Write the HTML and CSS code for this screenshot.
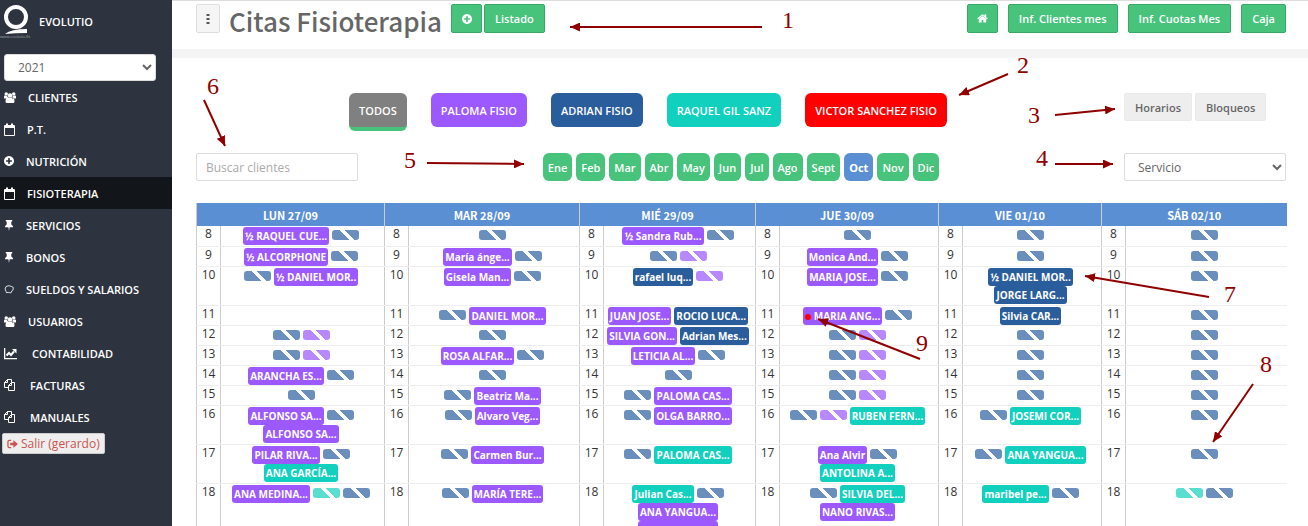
FILE: index.html
```html
<!DOCTYPE html>
<html lang="es">
<head>
<meta charset="utf-8">
<title>Citas Fisioterapia</title>
<link rel="stylesheet" href="styles.css">
</head>
<body>
<svg class="defs" aria-hidden="true">
  <symbol id="i-plus" viewBox="128 128 1536 1536"><path d="M1344 960v-128q0-26-19-45t-45-19h-256v-256q0-26-19-45t-45-19h-128q-26 0-45 19t-19 45v256h-256q-26 0-45 19t-19 45v128q0 26 19 45t45 19h256v256q0 26 19 45t45 19h128q26 0 45-19t19-45v-256h256q26 0 45-19t19-45zm320-64q0 209-103 385.5t-279.5 279.5-385.5 103-385.5-103-279.5-279.5-103-385.5 103-385.5 279.5-279.5 385.5-103 385.5 103 279.5 279.5 103 385.5z"/></symbol>
  <symbol id="i-home" viewBox="64 200 1664 1400"><path d="M1472 992v480q0 26-19 45t-45 19h-384v-384h-256v384h-384q-26 0-45-19t-19-45v-480q0-1 .5-3t.5-3l575-474 575 474q1 2 1 6zm223-69l-62 74q-8 9-21 11h-3q-13 0-21-7l-692-577-692 577q-12 8-24 7-13-2-21-11l-62-74q-8-10-7-23.5t11-21.5l719-599q32-26 76-26t76 26l244 204v-195q0-14 9-23t23-9h192q14 0 23 9t9 23v408l219 182q10 8 11 21.5t-7 23.5z"/></symbol>
  <symbol id="i-users" viewBox="0 0 24 22"><circle cx="4.500" cy="4" r="3.500"/><circle cx="19.500" cy="4" r="3.500"/><circle cx="12" cy="7" r="4.500"/><path d="M0 13V9q0-2 1.500-2 3 1.500 5 .5 0 3 2 5.500H0zM24 13V9q0-2-1.500-2-3 1.500-5 .5 0 3-2 5.500H24zM3 19q0-8 5-8.500 4 3 8 0 5 .5 5 8.500 0 3-3 3H6q-3 0-3-3z"/></symbol>
  <symbol id="i-cal" viewBox="0 0 11 13"><path fill-rule="evenodd" d="M0 3q0-1 1-1h1V.5h2V2h3V.5h2V2h1q1 0 1 1v9q0 1-1 1H1q-1 0-1-1zM1 5v7h9V5z"/></symbol>
  <symbol id="i-pin" viewBox="0 0 10 12"><path d="M1.500 0h7v1.500H7.500V5q2 1 2 3H5.700L5 12l-.7-4H.5q0-2 2-3V1.500h-1z"/></symbol>
  <symbol id="i-piggy" viewBox="0 0 12 12"><path fill="none" stroke="currentColor" d="M2.500 3Q6 1 9 3l2 1v3l-1.500 1-1 2.500H7L5 10l-2 .5L2.500 9Q0 6 2.500 3z"/></symbol>
  <symbol id="i-chart" viewBox="0 0 16 13"><path d="M0 1h1.300v10H13v1.300H0z"/><path fill="none" stroke="currentColor" stroke-width="2" d="M2.500 8.500 5 6l2 2L10 4.500"/><path d="M8 2h4.500v4.500z"/></symbol>
  <symbol id="i-copy" viewBox="0 0 14 14"><path fill="none" stroke="currentColor" d="M4.500 9.500h-4v-5l3-3h4V4M3.500 1.500v3h-3M7.500 4.500h3v8h-6v-5zM7.500 4.500v3h-3"/></symbol>
  <symbol id="i-exit" viewBox="0 0 12 11"><path fill="none" stroke="currentColor" stroke-width="1.400" d="M4.500 1.500h-2Q1 1.500 1 3v5q0 1.500 1.500 1.500h2"/><path d="M3.500 4H7V1.500l5 4-5 4V7H3.500z"/></symbol>
</svg>

<div class="app">
  <aside class="sidebar">
    <div class="brand">
      <svg class="logo" viewBox="0 0 34 42" aria-hidden="true">
        <circle cx="16" cy="17" r="10" fill="none" stroke="#fff" stroke-width="4"/>
        <path d="M5 34q6-5 22-5v4q-12 0-22 1z" fill="#fff"/>
        <text x="0" y="38" class="logo-url">www.evolutio.fit</text>
      </svg>
      <span>EVOLUTIO</span>
    </div>
    <select class="year" aria-label="Año"><option>2021</option></select>
    <nav class="menu">
      <a href="#"><svg width="12" height="11"><use href="#i-users"/></svg>CLIENTES</a>
      <a href="#"><svg width="11" height="13"><use href="#i-cal"/></svg>P.T.</a>
      <a href="#"><svg width="10" height="10"><use href="#i-plus"/></svg>NUTRICIÓN</a>
      <a href="#" class="active"><svg width="11" height="13"><use href="#i-cal"/></svg>FISIOTERAPIA</a>
      <a href="#"><svg width="10" height="11"><use href="#i-pin"/></svg>SERVICIOS</a>
      <a href="#"><svg width="10" height="11"><use href="#i-pin"/></svg>BONOS</a>
      <a href="#"><svg width="10" height="10"><use href="#i-piggy"/></svg>SUELDOS Y SALARIOS</a>
      <a href="#"><svg width="12" height="11"><use href="#i-users"/></svg>USUARIOS</a>
      <a href="#"><svg width="16" height="13"><use href="#i-chart"/></svg>CONTABILIDAD</a>
      <a href="#"><svg width="14" height="14"><use href="#i-copy"/></svg>FACTURAS</a>
      <a href="#"><svg width="14" height="14"><use href="#i-copy"/></svg>MANUALES</a>
    </nav>
    <button class="logout"><svg width="11" height="10"><use href="#i-exit"/></svg>Salir (gerardo)</button>
  </aside>

  <main class="main">
    <header class="topbar">
      <button class="toggle" aria-label="Menú"><svg width="4" height="12" viewBox="0 0 4 12"><path d="M.5 1h3v2h-3zM.5 5h3v2h-3zM.5 9h3v2h-3z"/></svg></button>
      <h1>Citas Fisioterapia</h1>
      <div class="actions">
        <button class="btn icon" aria-label="Añadir"><svg width="10" height="10"><use href="#i-plus"/></svg></button>
        <button class="btn">Listado</button>
      </div>
      <div class="reports">
        <button class="btn icon" aria-label="Inicio"><svg width="11" height="9"><use href="#i-home"/></svg></button>
        <button class="btn">Inf. Clientes mes</button>
        <button class="btn">Inf. Cuotas Mes</button>
        <button class="btn">Caja</button>
      </div>
    </header>

    <section class="content">
      <div class="filters">
        <div class="people">
          <button class="person all">TODOS</button>
          <button class="person violet">PALOMA FISIO</button>
          <button class="person blue">ADRIAN FISIO</button>
          <button class="person teal">RAQUEL GIL SANZ</button>
          <button class="person red">VICTOR SANCHEZ FISIO</button>
        </div>
        <div class="side">
          <button class="plain">Horarios</button>
          <button class="plain">Bloqueos</button>
        </div>
      </div>

      <div class="tools">
        <input class="field" type="text" placeholder="Buscar clientes" aria-label="Buscar clientes">
        <div class="months">
          <button>Ene</button><button>Feb</button><button>Mar</button><button>Abr</button><button>May</button><button>Jun</button><button>Jul</button><button>Ago</button><button>Sept</button><button class="current">Oct</button><button>Nov</button><button>Dic</button>
        </div>
        <select class="field" aria-label="Servicio"><option>Servicio</option></select>
      </div>

      <table class="week">
        <colgroup>
          <col class="hour"><col class="lun"><col class="hour"><col class="mar"><col class="hour"><col class="mie"><col class="hour"><col class="jue"><col class="hour"><col class="vie"><col class="hour"><col class="sab">
        </colgroup>
        <thead>
          <tr><th colspan="2">LUN 27/09</th><th colspan="2">MAR 28/09</th><th colspan="2">MIÉ 29/09</th><th colspan="2">JUE 30/09</th><th colspan="2">VIE 01/10</th><th colspan="2">SÁB 02/10</th></tr>
        </thead>
        <tbody>
          <tr>
            <th>8</th><td><div><b class="violet">½ RAQUEL CUE...</b><i></i></div></td>
            <th>8</th><td><div><i></i></div></td>
            <th>8</th><td><div><b class="violet">½ Sandra Rub...</b><i></i></div></td>
            <th>8</th><td><div><i></i></div></td>
            <th>8</th><td><div><i></i></div></td>
            <th>8</th><td><div><i></i></div></td>
          </tr>
          <tr>
            <th>9</th><td><div><b class="violet">½ ALCORPHONE</b><i></i></div></td>
            <th>9</th><td><div><b class="violet">María ánge...</b><i></i></div></td>
            <th>9</th><td><div><i></i><i class="lilac"></i></div></td>
            <th>9</th><td><div><b class="violet">Monica And...</b><i></i></div></td>
            <th>9</th><td><div><i></i></div></td>
            <th>9</th><td><div><i></i></div></td>
          </tr>
          <tr class="tall">
            <th>10</th><td><div><i></i><b class="violet">½ DANIEL MOR..</b></div></td>
            <th>10</th><td><div><b class="violet">Gisela Man...</b><i></i></div></td>
            <th>10</th><td><div><b class="blue">rafael luq...</b><i class="lilac"></i></div></td>
            <th>10</th><td><div><b class="violet">MARIA JOSE...</b><i></i></div></td>
            <th>10</th><td><div><b class="blue">½ DANIEL MOR..</b></div><div><b class="blue">JORGE LARG...</b></div></td>
            <th>10</th><td><div><i></i></div></td>
          </tr>
          <tr>
            <th>11</th><td></td>
            <th>11</th><td><div><i></i><b class="violet">DANIEL MOR...</b></div></td>
            <th>11</th><td><div><b class="violet">JUAN JOSE...</b><b class="blue">ROCIO LUCA...</b></div></td>
            <th>11</th><td><div><b class="violet"><span class="dot"></span>MARIA ANG...</b><i></i></div></td>
            <th>11</th><td><div><b class="blue">Silvia CAR...</b></div></td>
            <th>11</th><td><div><i></i></div></td>
          </tr>
          <tr>
            <th>12</th><td><div><i></i><i class="lilac"></i></div></td>
            <th>12</th><td><div><i></i></div></td>
            <th>12</th><td><div><b class="violet">SILVIA GON...</b><b class="blue">Adrian Mes...</b></div></td>
            <th>12</th><td><div><i></i><i class="lilac"></i></div></td>
            <th>12</th><td><div><i></i></div></td>
            <th>12</th><td><div><i></i></div></td>
          </tr>
          <tr>
            <th>13</th><td><div><i></i><i class="lilac"></i></div></td>
            <th>13</th><td><div><b class="violet">ROSA ALFAR...</b><i></i></div></td>
            <th>13</th><td><div><b class="violet">LETICIA AL...</b><i></i></div></td>
            <th>13</th><td><div><i></i><i class="lilac"></i></div></td>
            <th>13</th><td><div><i></i></div></td>
            <th>13</th><td><div><i></i></div></td>
          </tr>
          <tr>
            <th>14</th><td><div><b class="violet">ARANCHA ES...</b><i></i></div></td>
            <th>14</th><td><div><i></i></div></td>
            <th>14</th><td><div><i></i></div></td>
            <th>14</th><td><div><i></i><i class="lilac"></i></div></td>
            <th>14</th><td><div><i></i></div></td>
            <th>14</th><td><div><i></i></div></td>
          </tr>
          <tr>
            <th>15</th><td><div><i></i></div></td>
            <th>15</th><td><div><i></i><b class="violet">Beatriz Ma...</b></div></td>
            <th>15</th><td><div><i></i><b class="violet">PALOMA CAS...</b></div></td>
            <th>15</th><td><div><i></i><i class="lilac"></i></div></td>
            <th>15</th><td><div><i></i></div></td>
            <th>15</th><td><div><i></i></div></td>
          </tr>
          <tr class="tall">
            <th>16</th><td><div><b class="violet">ALFONSO SA...</b><i></i></div><div><b class="violet">ALFONSO SA...</b></div></td>
            <th>16</th><td><div><i></i><b class="violet">Alvaro Veg...</b></div></td>
            <th>16</th><td><div><i></i><b class="violet">OLGA BARRO...</b></div></td>
            <th>16</th><td><div><i></i><i class="lilac"></i><b class="teal">RUBEN FERN...</b></div></td>
            <th>16</th><td><div><i></i><b class="teal">JOSEMI COR...</b></div></td>
            <th>16</th><td><div><i></i></div></td>
          </tr>
          <tr class="tall">
            <th>17</th><td><div><b class="violet">PILAR RIVA...</b><i></i></div><div><b class="teal">ANA GARCÍA...</b></div></td>
            <th>17</th><td><div><i></i><b class="violet">Carmen Bur...</b></div></td>
            <th>17</th><td><div><i></i><b class="teal">PALOMA CAS...</b></div></td>
            <th>17</th><td><div><b class="violet">Ana Alvir</b><i></i></div><div><b class="teal">ANTOLINA A...</b></div></td>
            <th>17</th><td><div><i></i><b class="teal">ANA YANGUA...</b></div></td>
            <th>17</th><td><div><i></i></div></td>
          </tr>
          <tr>
            <th>18</th><td><div><b class="violet">ANA MEDINA...</b><i class="mint"></i><i></i></div></td>
            <th>18</th><td><div><i></i><b class="violet">MARÍA TERE...</b></div></td>
            <th>18</th><td><div><b class="teal">Julian Cas...</b><i></i></div><div><b class="violet">ANA YANGUA...</b></div><div><b class="violet">ANA YANGUA...</b></div></td>
            <th>18</th><td><div><i></i><b class="teal">SILVIA DEL...</b></div><div><b class="violet">NANO RIVAS...</b></div></td>
            <th>18</th><td><div><b class="teal">maribel pe...</b><i></i></div></td>
            <th>18</th><td><div><i class="mint"></i><i></i></div></td>
          </tr>
        </tbody>
      </table>
    </section>
  </main>

  <svg class="notes" width="1308" height="526" viewBox="0 0 1308 526">
    <defs><marker id="tip" viewBox="0 0 10 10" refX="10" refY="5" markerWidth="10" markerHeight="9" markerUnits="userSpaceOnUse" orient="auto" preserveAspectRatio="none"><path d="M0 0 10 5 0 10z"/></marker></defs>
    <g class="arrows">
      <path d="M762 27H570"/>
      <path d="M1008 74 959 95"/>
      <path d="M1055 115 1115 109"/>
      <path d="M1055 164H1113"/>
      <path d="M427 163 524 164"/>
      <path d="M204 100 225 146"/>
      <path d="M1209 297 1085 276"/>
      <path d="M1253 384 1213 442"/>
      <path d="M920 359 818 319"/>
    </g>
    <text x="782" y="28">1</text>
    <text x="1017" y="73">2</text>
    <text x="1028" y="123">3</text>
    <text x="1036" y="166">4</text>
    <text x="404" y="168">5</text>
    <text x="207" y="94">6</text>
    <text x="1224" y="302">7</text>
    <text x="1260" y="372">8</text>
    <text x="916" y="351">9</text>
  </svg>
</div>
</body>
</html>
```

FILE: styles.css
```css
* { box-sizing: border-box; }

body {
  margin: 0;
  font: 12px "Open Sans", "Noto Sans", sans-serif;
  color: #666;
  background: #fff;
}

button, input, select { font: inherit; margin: 0; }
button { cursor: pointer; white-space: nowrap; }
svg { fill: currentColor; flex: none; }
.defs { position: absolute; width: 0; height: 0; }

.app {
  position: relative;
  display: flex;
  height: 100vh;
  overflow: hidden;
}

/* Sidebar */
.sidebar {
  flex: none;
  width: 172px;
  background: #2d343f;
  color: #fff;
}
.brand {
  display: flex;
  align-items: center;
  gap: 5px;
  height: 54px;
  padding-bottom: 12px;
  font-size: 11px;
  font-weight: 600;
}
.logo { width: 34px; height: 42px; }
.logo-url { font-size: 4px; font-weight: 400; fill: #a0a4aa; }
.year {
  display: block;
  width: 152px;
  height: 27px;
  margin-left: 4px;
  padding: 0 0 0 9px;
  border: 1px solid #ddd;
  border-radius: 3px;
  background: #fff;
  color: #666;
}
.menu a {
  display: flex;
  align-items: center;
  gap: 12px;
  height: 32px;
  padding-left: 4px;
  color: #fff;
  font-size: 11px;
  font-weight: 600;
  text-decoration: none;
}
.menu .active { background: #121519; }
.logout {
  display: flex;
  align-items: center;
  gap: 3px;
  height: 21px;
  margin-left: 2px;
  padding: 0 4px;
  border: 1px solid #ccc;
  border-radius: 2px;
  background: #eee;
  color: #c9544d;
}

/* Top bar */
.main { flex: 1; min-width: 0; }
.topbar {
  display: flex;
  align-items: flex-start;
  height: 58px;
  padding: 3px 22px 0 24px;
  border-top: 1px solid #ddd;
  border-bottom: 9px solid #f4f4f4;
}
.toggle {
  display: flex;
  align-items: center;
  justify-content: center;
  width: 24px;
  height: 29px;
  padding: 0;
  border: 1px solid #ddd;
  border-radius: 2px;
  background: #f5f5f5;
  color: #555;
}
h1 {
  margin: 0 9px;
  font: 500 26px/34px "Noto Sans CJK JP", "Open Sans", sans-serif;
  color: #666;
  white-space: nowrap;
}
.actions { display: flex; gap: 2px; }
.reports { display: flex; gap: 10px; margin-left: auto; }
.btn {
  display: flex;
  align-items: center;
  justify-content: center;
  height: 29px;
  padding: 0 10px;
  border: 1px solid #37a866;
  border-radius: 2px;
  background: #48c37c;
  color: #fff;
  font-size: 11px;
  font-weight: 600;
}
.btn.icon { width: 31px; padding: 0; }

/* Filters */
.content { padding: 35px 22px 0 24px; }
.filters { display: flex; gap: 24px; height: 60px; }
.people {
  display: flex;
  flex: 1;
  justify-content: center;
  align-items: flex-start;
  gap: 24px;
}
.person {
  height: 34px;
  padding: 0 10px;
  border: 0;
  border-radius: 6px;
  color: #fff;
  font-size: 11px;
  font-weight: 600;
}
.person.all { height: 38px; background: #808080; border-bottom: 4px solid #48c37c; }
.violet { background: #9c59ff; }
.blue { background: #2a5d9c; }
.teal { background: #12d0be; }
.red { background: #f00; }
.side { display: flex; gap: 3px; width: 162px; }
.plain {
  height: 28px;
  padding: 0 10px;
  border: 1px solid #eaeaea;
  border-radius: 2px;
  background: #eee;
  color: #666;
  font-size: 11px;
  font-weight: 600;
}
.tools {
  display: grid;
  grid-template-columns: 162px 1fr 162px;
  margin-bottom: 22px;
}
.field {
  width: 100%;
  height: 28px;
  padding: 0 9px;
  border: 1px solid #ddd;
  border-radius: 2px;
  background: #fff;
  color: #666;
}
select.field { padding-right: 0; }
.field::placeholder { color: #aaa; }
.months { display: flex; justify-content: center; gap: 4px; }
.months button {
  height: 28px;
  padding: 0 5px;
  border: 0;
  border-radius: 6px;
  background: #48c37c;
  color: #fff;
  font-size: 11px;
  font-weight: 600;
}
.months .current { background: #5b8fd3; font-weight: 700; }

/* Week table */
.week {
  width: 100%;
  table-layout: fixed;
  border-collapse: collapse;
}
.hour { width: 24px; }
.lun { width: 164px; }
.mar { width: 171px; }
.mie { width: 152px; }
.jue { width: 159px; }
.vie { width: 139px; }
.sab { width: 161px; }
.week thead th {
  height: 23px;
  padding: 0;
  border-left: 1px solid #ccc;
  background: #5b8fd3;
  color: #fff;
  font: 700 11px/20px "Noto Sans CJK JP", "Open Sans", sans-serif;
}
.week tbody tr { height: 20px; }
.week tbody .tall { height: 39px; }
.week tbody th {
  padding: 0;
  border: 1px solid #ccc;
  border-width: 0 1px 1px;
  border-bottom-color: #eee;
  color: #333;
  font-size: 12px;
  font-weight: 400;
  line-height: 16px;
  vertical-align: top;
}
.week td {
  padding: 1px 3px 0 0;
  border-bottom: 1px solid #eee;
  vertical-align: top;
}
.week td div {
  display: flex;
  justify-content: center;
  gap: 3px;
  height: 18px;
}
.week b {
  height: 18px;
  padding: 0 2px;
  border-radius: 3px;
  color: #fff;
  font-size: 10px;
  font-weight: 700;
  line-height: 18px;
  white-space: nowrap;
}
.week i {
  --slot: #6a8fbc;
  width: 27px;
  height: 10px;
  margin-top: 3px;
  border-radius: 3px;
  background: linear-gradient(45deg, var(--slot) calc(50% - 1px), #fff calc(50% - 1px), #fff calc(50% + 3px), var(--slot) calc(50% + 3px));
}
.week .lilac { --slot: #b888ff; }
.week .mint { --slot: #58dfd0; }
.dot {
  display: inline-block;
  width: 6px;
  height: 6px;
  margin-right: 3px;
  border-radius: 50%;
  background: #f00;
}

/* Numbered callouts over the page */
.notes {
  position: absolute;
  top: 0;
  left: 0;
  pointer-events: none;
  fill: #900000;
  font: 24px "Liberation Serif", serif;
}
.arrows path { stroke: #900000; stroke-width: 2; marker-end: url(#tip); }
.arrows { fill: none; }
#tip path { fill: #900000; stroke: none; }
```
